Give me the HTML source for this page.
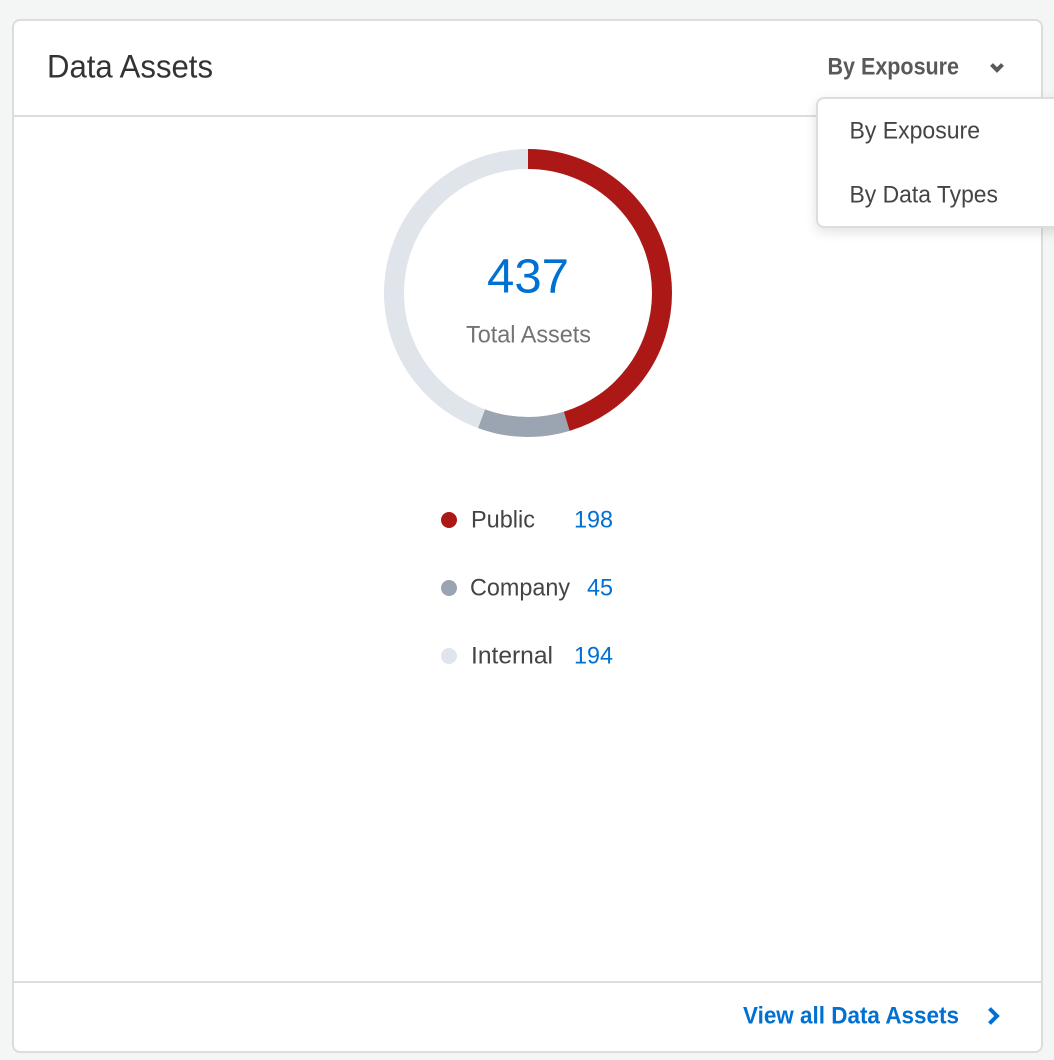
<!DOCTYPE html>
<html>
<head>
<meta charset="utf-8">
<style>
html,body{margin:0;padding:0;width:1054px;height:1060px;overflow:hidden;background:#f4f6f5}
svg{position:absolute;left:0;top:0;display:block}
text{font-family:"Liberation Sans",sans-serif}
.card{position:absolute;left:12px;top:19px;width:1027px;height:1030px;background:#fff;border:2px solid #dcdedd;border-radius:8px}
.l1{position:absolute;left:14px;top:115px;width:1027px;height:2px;background:#dcdedd}
.l2{position:absolute;left:14px;top:981px;width:1027px;height:2px;background:#dcdedd}
.menu{position:absolute;left:815.5px;top:96.5px;width:260px;height:127px;background:#fff;border:2px solid #dcdedd;border-radius:8px;box-shadow:0 4px 12px rgba(0,0,0,.12)}
</style>
</head>
<body>
<div class="card"></div>
<div class="l1"></div>
<div class="l2"></div>
<div class="menu"></div>
<svg width="1054" height="1060" viewBox="0 0 1054 1060" xmlns="http://www.w3.org/2000/svg">
  <text x="47" y="77.5" font-size="32" fill="#333" textLength="166" lengthAdjust="spacingAndGlyphs">Data Assets</text>
  <text x="827.5" y="74.5" font-size="24" font-weight="700" fill="#595959" textLength="131.5" lengthAdjust="spacingAndGlyphs">By Exposure</text>
  <path d="M991.5 64.5 L997 70 L1002.5 64.5" fill="none" stroke="#595959" stroke-width="4"/>
  <text x="849.5" y="138.5" font-size="24" fill="#444" textLength="130.5" lengthAdjust="spacingAndGlyphs">By Exposure</text>
  <text x="849.5" y="202.5" font-size="24" fill="#444" textLength="148.5" lengthAdjust="spacingAndGlyphs">By Data Types</text>

  <g fill="none" stroke-width="20" transform="rotate(-90 528 293)">
    <circle cx="528" cy="293" r="134" stroke="#e0e5ec"/>
    <circle cx="528" cy="293" r="134" stroke="#9aa5b1" stroke-dasharray="86.7 755.25" stroke-dashoffset="-381.5"/>
    <circle cx="528" cy="293" r="134" stroke="#ac1816" stroke-dasharray="381.5 460.45"/>
  </g>
  <text x="487" y="292.5" font-size="48" fill="#0070d2" textLength="82" lengthAdjust="spacingAndGlyphs">437</text>
  <text x="466" y="342.5" font-size="24" fill="#737373" textLength="125" lengthAdjust="spacingAndGlyphs">Total Assets</text>

  <circle cx="449" cy="520" r="8" fill="#ac1816"/>
  <text x="471" y="527.5" font-size="24" fill="#444" textLength="64" lengthAdjust="spacingAndGlyphs">Public</text>
  <text x="574" y="527.5" font-size="24" fill="#0070d2" textLength="39" lengthAdjust="spacingAndGlyphs">198</text>

  <circle cx="449" cy="588" r="8" fill="#9aa5b1"/>
  <text x="470" y="595.5" font-size="24" fill="#444" textLength="100" lengthAdjust="spacingAndGlyphs">Company</text>
  <text x="587" y="595.5" font-size="24" fill="#0070d2" textLength="26" lengthAdjust="spacingAndGlyphs">45</text>

  <circle cx="449" cy="656" r="8" fill="#e0e5ec"/>
  <text x="471" y="663.5" font-size="24" fill="#444" textLength="82" lengthAdjust="spacingAndGlyphs">Internal</text>
  <text x="574" y="663.5" font-size="24" fill="#0070d2" textLength="39" lengthAdjust="spacingAndGlyphs">194</text>

  <text x="743" y="1023.5" font-size="24" font-weight="700" fill="#0070d2" textLength="216" lengthAdjust="spacingAndGlyphs">View all Data Assets</text>
  <path d="M989.5 1008.5 L997 1016 L989.5 1023.5" fill="none" stroke="#0070d2" stroke-width="4"/>
</svg>
</body>
</html>
